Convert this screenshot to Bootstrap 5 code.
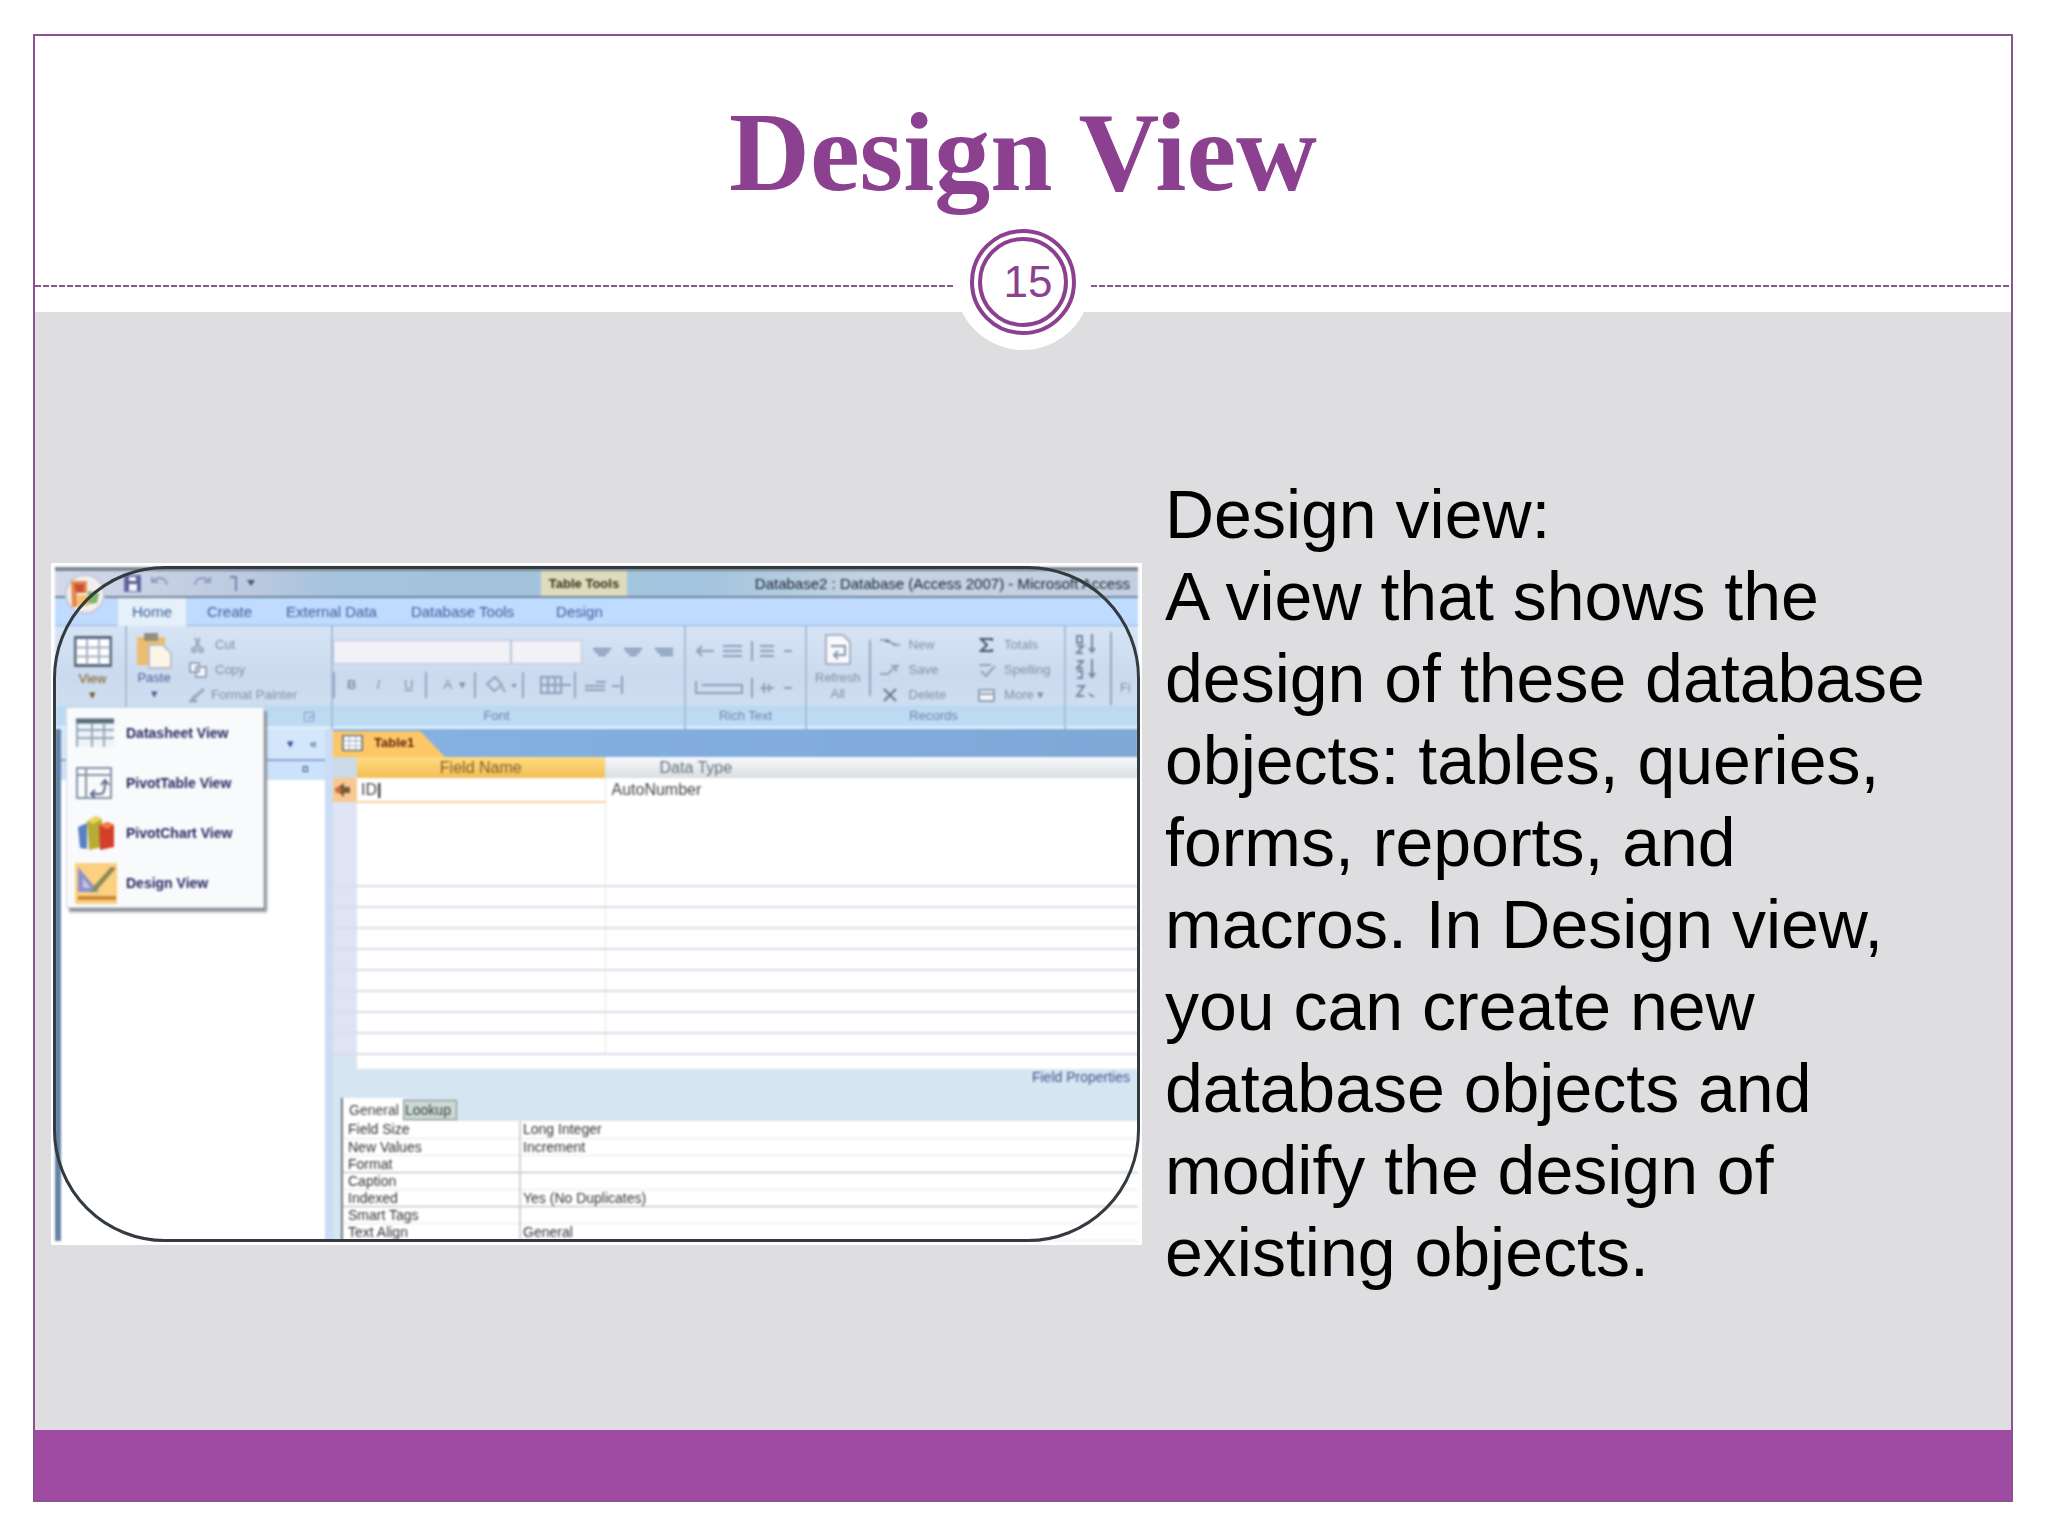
<!DOCTYPE html>
<html lang="en">
<head>
<meta charset="utf-8">
<meta name="viewport" content="width=device-width, initial-scale=1">
<title>Design View</title>
<link href="https://cdn.jsdelivr.net/npm/bootstrap@5.3.0/dist/css/bootstrap.min.css" rel="stylesheet">
<style>
:root{--plum:#8b4190;--band:#9f4ba3;--panel:#dedddf}
body{font-family:"Liberation Sans",Arial,sans-serif;background:#fff;color:#000}
.slide{min-height:100vh;padding:34px 35px 34px 33px}
.slide-frame{border:2px solid #8a5490}
.slide-head{padding-top:56px}
.slide-title{font-family:"Liberation Serif",serif;font-weight:700;font-size:112px;line-height:120px;color:var(--plum);margin:0 0 2px}
.divider-row{margin-bottom:-38px;position:relative;z-index:1}
.dash{height:2px;margin-top:8px;background:repeating-linear-gradient(90deg,#8b5590 0 6px,#fff 6px 8px)}
.halo{width:136px;height:136px;background:#fff}
.ring{width:106px;height:106px;border:4px solid var(--plum);padding:4px}
.ring-inner{border:4px solid var(--plum);font-size:44px;line-height:44px;color:var(--plum);padding-left:10px}
.slide-body{background:var(--panel);display:grid;grid-template-columns:minmax(0,1091fr) minmax(0,787fr);column-gap:23px;padding:161px 59px 0 16px;align-items:start}
.slide-text{font-size:68px;line-height:82px;margin:0}
.slide-foot{height:70px;background:var(--band)}

/* application window shown in the figure */
.shot{margin:90px 0 0;background:#fff;padding:4px;position:relative}
.shot-in{filter:blur(1px);font-size:13px;line-height:16px;color:#5a6a86}
.shot-line{position:absolute;inset:3px 2px 3px 2px;border:3px solid #333a40;border-radius:112px;pointer-events:none}
.shot button{border:0;background:none;padding:0;font:inherit;color:inherit;line-height:16px;text-align:left;white-space:nowrap}
.shot svg{flex:none;display:block}
.app-title{height:31px;border-top:4px solid #7b8791;border-bottom:2px solid #71869c;background:linear-gradient(90deg,#d3d9ea 0,#bcc9e0 18%,#a4c3dc 26%,#a3c4de 60%,#c4d3e2 75%,#c3cfe0)}
.app-name{font-size:15px;color:#1b2230;padding-right:8px}
.quick{width:486px;padding-left:8px}
.ctx{background:#dcdcbd;color:#33301c;font-weight:700;width:86px;height:25px;line-height:25px;text-align:center}
.app-tabs{height:28px;background:#bfdbff;border-bottom:1px solid #95b4dc;font-size:15px;color:#3c5f98;padding-left:63px}
.app-tabs button{padding:0 17px}
.app-tabs .tab-on{background:#e6f0fa;height:28px;padding:0 14px}
.ribbon{height:103px;background:linear-gradient(#d6e4f5,#cbdaee 50%,#cfdff0 79px,#bcd9f2 80px,#bfdcf5 100px,#e2f2ff 101px)}
.grp{border-right:2px solid #a9bdd8;padding-top:6px;color:#8391a8}
.grp-body{height:75px}
.grp-name{height:20px;line-height:18px;text-align:center;color:#6b83a5}
.g-view{width:72px}.g-clip{width:206px}.g-font{width:353px}.g-rich{width:121px}.g-rec{width:259px}
.view-btn{width:53px;background:linear-gradient(#eef3f5 0 40px,#f6c873 41px,#ffdf8a);margin-left:11px;height:78px;color:#7a5a20!important;padding-top:6px!important}
.paste-btn{color:#4c5f96!important}
.stack{height:75px;justify-content:space-around}
.combo{height:24px;border:1px solid #b9c5da;background:#f1f1f6;padding:0;border-radius:0;appearance:none}
.combo-face{width:178px}
.combo-size{width:71px}
.v-rule{width:2px;height:26px;background:#93a5c4}
.menu-pop{position:absolute;left:11px;top:81px;width:198px;height:201px;background:#f9fafc;border:1px solid #d5dae2;box-shadow:3px 4px 2px #8e939a;z-index:3;padding:0 8px;font-weight:700;font-size:14px;color:#252760}
.menu-pop li{height:50px}
.menu-pop button{gap:9px;height:50px;width:100%}
.nav-pane{width:270px;border-left:6px solid #6582a6;background:#fff}
.pane-head{height:32px;background:#d3e6fb;border-bottom:2px solid #86a6cf;color:#36568c}
.pane-sub{height:19px;background:#cce1fa;color:#36568c}
.doc{border-left:8px solid #cbdcf4;background:#d5e5f2}
.doc-tabs{height:28px;background:linear-gradient(90deg,#85b2e4,#7ea8d6)}
.doc-tab{width:112px;height:28px;background:#fcc766;clip-path:polygon(0 8%,78% 8%,100% 100%,0 100%);font-weight:700;color:#641e08;padding-left:8px;gap:10px}
.sheet{width:100%;table-layout:fixed;border-collapse:collapse;background:#fff;font-size:16px;line-height:16px;color:#454545}
.sheet td,.sheet th{padding:0 6px;height:21px;font-weight:400;overflow:hidden;white-space:nowrap}
.sheet th{text-align:center}
.sheet .c-sel{width:24px;background:#dfe4f4;padding:0}
.sheet .c-name{width:248px}
.sheet .h-name{background:linear-gradient(#ffdc80,#f3bd57);color:#80602a}
.sheet .h-type{background:linear-gradient(#f6fafd,#d9dde0);color:#687078;text-align:left;padding-left:54px}
.sheet .h-sel{background:#cdd9e6}
.sheet .r-id td{height:24px}
.sheet .r-id .c-sel{background:#f8c992}
.sheet .r-id .c-name{border-bottom:2px solid #f7d3a0;padding-left:4px}
.sheet .lined td{border-bottom:2px solid #d8dce9}
.sheet .c-name{border-right:1px solid #ebe6e9}
.sheet-tail{height:14px;background:#fff;margin-left:24px}
.props-head{height:52px;color:#40568c;padding-left:8px;font-size:14px}
.props-head .p-tab{background:#fff;color:#3d3d3d;height:23px;width:62px;padding-left:6px;border-left:2px solid #777}
.props-head .p-tab2{background:#cbd8d4;color:#3d3d3d;border:1px solid #7f8c8c;height:20px;width:54px;margin-bottom:1px;padding-left:1px}
.props{width:calc(100% - 8px);margin-left:8px;border-collapse:collapse;background:#fff;color:#333;font-size:14px;line-height:16px;border-left:2px solid #777;table-layout:fixed}
.props td,.props th{height:17px;padding:0 0 0 5px;font-weight:400;border-bottom:1px solid #e6e6e8}
.props td{padding-left:2px}
.props th{width:178px;border-right:2px solid #d2d2d4}
.props .firm>*{border-bottom:1px solid #aeb0b4}
</style>
</head>
<body>
<svg width="0" height="0" class="position-absolute" aria-hidden="true">
  <symbol id="i-sheet" viewBox="0 0 38 30"><rect x="1" y="1" width="36" height="28" fill="#fff" stroke="#59697f" stroke-width="3"/><path d="M13 2v26M25 2v26M2 11h34M2 20h34" stroke="#a6b1c2" stroke-width="2"/></symbol>
</svg>
<main class="slide d-flex">
<section class="slide-frame d-flex flex-column flex-grow-1">
  <header class="slide-head bg-white">
    <h1 class="slide-title text-center">Design View</h1>
    <div class="divider-row d-flex align-items-center">
      <div class="dash flex-grow-1"></div>
      <div class="halo rounded-circle d-flex align-items-center justify-content-center">
        <div class="ring rounded-circle d-flex"><div class="ring-inner rounded-circle flex-grow-1 d-flex align-items-center justify-content-center">15</div></div>
      </div>
      <div class="dash flex-grow-1"></div>
    </div>
  </header>

  <div class="slide-body flex-grow-1">
    <figure class="shot">
      <div class="shot-in">
        <div class="app-title d-flex align-items-center">
          <div class="quick d-flex align-items-center">
            <svg width="44" height="44" viewBox="0 0 44 44" class="position-relative z-1 mt-4"><circle cx="22" cy="20" r="19" fill="#f3eff0" stroke="#c9c9d4" stroke-width="2"/><path d="M8 7h16v12H14v14H9z" fill="#e48a4e"/><path d="M11 10h10v8h-8z" fill="#c94f35"/><path d="M15 21h10v11H14z" fill="#f7bd6c"/><path d="M25 17l11 2-2 10-9 1z" fill="#7fb36a"/></svg>
            <svg class="ms-3" width="150" height="20" viewBox="0 0 150 20" fill="none" stroke="#8e9ec0" stroke-width="2"><path d="M2 2h15v15H2z" fill="#5b5e9a" stroke="#6a6ca2"/><path d="M6 10h8v7H6zM6 3h7v4H6z" fill="#f4f5fb" stroke="none"/><path d="M29 8c6-6 14-5 15 3M29 3v5h6M87 8c-6-6-14-5-15 3M87 3v5h-6"/><path d="M107 3h6v14" stroke="#7484aa"/><path d="M124 6h8l-4 6z" fill="#40557a" stroke="none"/></svg>
          </div>
          <div class="ctx">Table Tools</div>
          <div class="app-name ms-auto text-nowrap">Database2 : Database (Access 2007) - Microsoft Access</div>
        </div>
        <div class="app-tabs d-flex align-items-center">
          <button type="button" class="tab-on">Home</button><button type="button" class="ms-1">Create</button><button type="button">External Data</button><button type="button">Database Tools</button><button type="button" class="ms-2">Design</button>
        </div>

        <div class="ribbon d-flex">
          <div class="grp g-view position-relative pt-1">
            <button type="button" class="view-btn d-flex flex-column align-items-center"><svg width="38" height="31"><use href="#i-sheet"/></svg><span class="mt-1">View</span><span>▾</span></button>
            <ul class="menu-pop list-unstyled m-0">
              <li><button type="button" class="d-flex align-items-center"><svg width="42" height="30" viewBox="0 0 42 30"><path d="M1 1h38v28H1z" fill="#eef3f7"/><path d="M1 3h38" stroke="#566d78" stroke-width="5"/><path d="M2 5v24M17 5v24M29 5v24M2 12h37M2 20h37" stroke="#91a8b7" stroke-width="2"/></svg>Datasheet View</button></li>
              <li><button type="button" class="d-flex align-items-center"><svg width="42" height="34" viewBox="0 0 42 34" fill="none" stroke="#8792a6" stroke-width="2"><path d="M2 2h34v30H2zM11 2v30M2 9h34" /><path d="M17 28h9c4 0 4-9 4-12M26 19l4-5 4 5M20 24l-4 4 4 4" stroke="#586a88"/></svg>PivotTable View</button></li>
              <li><button type="button" class="d-flex align-items-center"><svg width="42" height="36" viewBox="0 0 42 36"><path d="M3 12l9-4v26l-7-1z" fill="#5a80c2"/><path d="M12 6l9-5 6 3v28l-13 3z" fill="#b7ac35"/><path d="M12 6l9-5 6 3-9 5z" fill="#ead65c"/><path d="M24 10l9-3 6 3v22l-14 3z" fill="#d2402a"/><path d="M24 10l9-3 6 3-7 4z" fill="#f07c43"/></svg>PivotChart View</button></li>
              <li><button type="button" class="d-flex align-items-center"><svg width="42" height="41" viewBox="0 0 42 41"><path d="M0 0h42v41H0z" fill="#fbd080"/><path d="M3 4l21 25H3z" fill="#8c91cf"/><path d="M8 15l8 10H8z" fill="#c9c2d6"/><path d="M41 5L22 27l-6 3 3-7L36 4z" fill="#8a8b55"/><path d="M3 35h38" stroke="#c88935" stroke-width="4"/></svg>Design View</button></li>
            </ul>
          </div>
          <div class="grp g-clip">
            <div class="grp-body d-flex">
              <button type="button" class="d-flex flex-column align-items-center paste-btn ms-2 me-3"><svg width="38" height="38" viewBox="0 0 38 38"><path d="M2 5h28v28H2z" fill="#ecbd6f"/><path d="M9 1h14v8H9z" fill="#948d80"/><path d="M14 13h14l8 8v15H14z" fill="#fbf5e8" stroke="#b9bfca" stroke-width="2"/></svg><span>Paste</span><span>▾</span></button>
              <div class="stack d-flex flex-column">
                <button type="button" class="d-flex gap-2"><svg width="18" height="16" viewBox="0 0 18 16" fill="none" stroke="#98a6bc" stroke-width="2"><path d="M6 1l5 10M11 1L6 11"/><circle cx="5" cy="13" r="2"/><circle cx="12" cy="13" r="2"/></svg>Cut</button>
                <button type="button" class="d-flex gap-2"><svg width="18" height="16" viewBox="0 0 18 16" fill="#f5f7fb" stroke="#98a6bc" stroke-width="2"><path d="M1 1h9v9H1zM7 5h10v10H7z"/></svg>Copy</button>
                <button type="button" class="d-flex gap-1"><svg width="18" height="16" viewBox="0 0 18 16" fill="none" stroke="#98a6bc" stroke-width="3"><path d="M15 2L6 10M7 8l-5 6h6"/></svg>Format Painter</button>
              </div>
            </div>
            <div class="grp-name text-end pe-3">◲</div>
          </div>
          <div class="grp g-font">
            <div class="grp-body">
              <div class="d-flex align-items-center pt-2">
                <select class="combo combo-face" aria-label="Font"><option></option></select><select class="combo combo-size" aria-label="Font size"><option></option></select>
                <svg class="ms-2" width="84" height="18" viewBox="0 0 84 18" stroke="#7e91b3" stroke-width="2"><path d="M3 6h18M5 9h14M8 12h8M34 6h18M36 9h14M39 12h8M65 6h18M67 9h16M70 12h13"/></svg>
              </div>
              <div class="d-flex align-items-center pt-2">
                <div class="v-rule me-2"></div><button type="button" class="fw-bold px-1">B</button><button type="button" class="fst-italic px-3">I</button><button type="button" class="text-decoration-underline px-2">U</button><div class="v-rule ms-1 me-3"></div>
                <button type="button">A &nbsp;▾</button><div class="v-rule ms-2 me-2"></div>
                <svg width="34" height="20" viewBox="0 0 34 20" fill="none" stroke="#93a3bf" stroke-width="2"><path d="M3 9l8-7 7 8-8 6zM18 12l3 5"/><path d="M27 9h6l-3 4z" fill="#8292b0" stroke="none"/></svg>
                <div class="v-rule ms-1 me-3"></div>
                <svg width="34" height="20" viewBox="0 0 34 20" fill="none" stroke="#8d9ebc" stroke-width="2"><path d="M1 2h20v16H1zM8 2v16M15 2v16M1 10h30"/></svg>
                <div class="v-rule me-2"></div>
                <svg width="40" height="20" viewBox="0 0 40 20" fill="none" stroke="#8d9ebc" stroke-width="2"><path d="M1 11h20M1 15h20M12 7h10M28 11h8M38 1v18"/></svg>
              </div>
            </div>
            <div class="grp-name pe-4">Font</div>
          </div>
          <div class="grp g-rich">
            <div class="grp-body d-flex flex-column justify-content-around px-2">
              <svg width="104" height="22" viewBox="0 0 104 22" fill="none" stroke="#8d9ebc" stroke-width="2"><path d="M4 11h16M8 6l-5 5 5 5M29 6h19M29 11h19M29 16h19M58 1v20M66 6h14M66 11h14M66 16h14M90 11h8"/></svg>
              <svg width="104" height="22" viewBox="0 0 104 22" fill="none" stroke="#8d9ebc" stroke-width="2"><path d="M2 4v12h46V8H8M58 1v20M66 11h14M70 6v10M75 7v8M90 11h8"/></svg>
            </div>
            <div class="grp-name">Rich Text</div>
          </div>
          <div class="grp g-rec">
            <div class="grp-body d-flex">
              <button type="button" class="d-flex flex-column align-items-center ps-2 pe-2"><svg width="34" height="34" viewBox="0 0 34 34"><path d="M5 3h17l7 7v22H5z" fill="#f8f9fc" stroke="#a7b0c2" stroke-width="2"/><path d="M10 14h14v9H14M17 19l-4 4 4 4" fill="none" stroke="#8997ae" stroke-width="2"/></svg><span class="mt-1">Refresh</span><span>All</span></button>
              <div class="v-rule h-75 mt-2"></div>
              <div class="stack d-flex flex-column ps-2">
                <button type="button" class="d-flex gap-2"><svg width="22" height="16" viewBox="0 0 22 16" stroke="#97a5ba" stroke-width="2"><path d="M1 3h8l6 5h6"/></svg>New</button>
                <button type="button" class="d-flex gap-2"><svg width="22" height="16" viewBox="0 0 22 16" fill="none" stroke="#97a5ba" stroke-width="2"><path d="M1 12h8l8-8v6M12 4h8"/></svg>Save</button>
                <button type="button" class="d-flex gap-2"><svg width="22" height="16" viewBox="0 0 22 16" stroke="#66748e" stroke-width="2"><path d="M5 2l12 12M17 2L5 14"/></svg>Delete</button>
              </div>
              <div class="stack d-flex flex-column ms-2 ps-4">
                <button type="button" class="d-flex gap-2"><svg width="18" height="16" viewBox="0 0 18 16" fill="none" stroke="#46536e" stroke-width="2"><path d="M14 4V2H3l6 6-6 6h11v-2"/></svg>Totals</button>
                <button type="button" class="d-flex gap-2"><svg width="18" height="16" viewBox="0 0 18 16" fill="none" stroke="#92a1b8" stroke-width="2"><path d="M1 3h12M3 9l5 5 9-10"/></svg>Spelling</button>
                <button type="button" class="d-flex gap-2"><svg width="18" height="16" viewBox="0 0 18 16" fill="#f4f6fa" stroke="#92a1b8" stroke-width="2"><path d="M1 3h15v11H1zM1 7h15"/></svg>More ▾</button>
              </div>
            </div>
            <div class="grp-name pe-1">Records</div>
          </div>
          <div class="grp border-0 flex-grow-1 d-flex ps-2">
            <svg width="36" height="78" viewBox="0 0 36 78" fill="none" stroke="#7787a3" stroke-width="2"><path d="M3 4h5v7H3zM3 14h6l-6 7h6M18 2v18M15 16l3 4 3-4M3 29h6l-6 7h6M3 39h5v7H3M18 27v18M15 41l3 4 3-4M3 54h7l-7 10h7M15 62l5 3"/></svg>
            <div class="v-rule h-75"></div><div class="pt-5 ps-2">Fi</div>
          </div>
        </div>

        <div class="d-flex">
          <div class="nav-pane flex-shrink-0">
            <div class="pane-head d-flex justify-content-end align-items-center gap-3 pe-2"><span>▾</span><span>«</span></div>
            <div class="pane-sub text-end pe-3">¤</div>
          </div>
          <div class="doc flex-grow-1">
            <div class="doc-tabs"><div class="doc-tab d-flex align-items-center"><svg width="23" height="16"><use href="#i-sheet"/></svg>Table1</div></div>
            <table class="sheet">
              <thead><tr><th class="c-sel h-sel"></th><th class="c-name h-name">Field Name</th><th class="h-type">Data Type</th></tr></thead>
              <tbody>
                <tr class="r-id"><td class="c-sel"><svg width="20" height="18" viewBox="0 0 20 18"><path d="M2 8l9-6v4h6v6h-6v4z" fill="#765c38"/><circle cx="5" cy="9" r="3" fill="#e0673a"/></svg></td><td class="c-name">ID<span class="text-dark fw-bold">|</span></td><td>AutoNumber</td></tr>
                <tr><td class="c-sel"></td><td class="c-name"></td><td></td></tr>
                <tr><td class="c-sel"></td><td class="c-name"></td><td></td></tr>
                <tr><td class="c-sel"></td><td class="c-name"></td><td></td></tr>
                <tr class="lined"><td class="c-sel"></td><td class="c-name"></td><td></td></tr>
                <tr class="lined"><td class="c-sel"></td><td class="c-name"></td><td></td></tr>
                <tr class="lined"><td class="c-sel"></td><td class="c-name"></td><td></td></tr>
                <tr class="lined"><td class="c-sel"></td><td class="c-name"></td><td></td></tr>
                <tr class="lined"><td class="c-sel"></td><td class="c-name"></td><td></td></tr>
                <tr class="lined"><td class="c-sel"></td><td class="c-name"></td><td></td></tr>
                <tr class="lined"><td class="c-sel"></td><td class="c-name"></td><td></td></tr>
                <tr class="lined"><td class="c-sel"></td><td class="c-name"></td><td></td></tr>
                <tr class="lined"><td class="c-sel"></td><td class="c-name"></td><td></td></tr>
              </tbody>
            </table>
            <div class="sheet-tail"></div>
            <div class="props-head d-flex align-items-end">
              <button type="button" class="p-tab">General</button><button type="button" class="p-tab2">Lookup</button>
              <div class="ms-auto align-self-start text-nowrap pe-2">Field Properties</div>
            </div>
            <table class="props">
              <tbody>
                <tr><th scope="row">Field Size</th><td>Long Integer</td></tr>
                <tr><th scope="row">New Values</th><td>Increment</td></tr>
                <tr class="firm"><th scope="row">Format</th><td></td></tr>
                <tr><th scope="row">Caption</th><td></td></tr>
                <tr class="firm"><th scope="row">Indexed</th><td>Yes (No Duplicates)</td></tr>
                <tr><th scope="row">Smart Tags</th><td></td></tr>
                <tr><th scope="row">Text Align</th><td>General</td></tr>
              </tbody>
            </table>
          </div>
        </div>
      </div>
      <div class="shot-line"></div>
    </figure>
    <p class="slide-text">Design view:<br>A view that shows the design of these database objects: tables, queries, forms, reports, and macros. In Design view, you can create new database objects and modify the design of existing objects.</p>
  </div>
  <footer class="slide-foot"></footer>
</section>
</main>
<script src="https://cdn.jsdelivr.net/npm/bootstrap@5.3.0/dist/js/bootstrap.bundle.min.js"></script>
</body>
</html>
